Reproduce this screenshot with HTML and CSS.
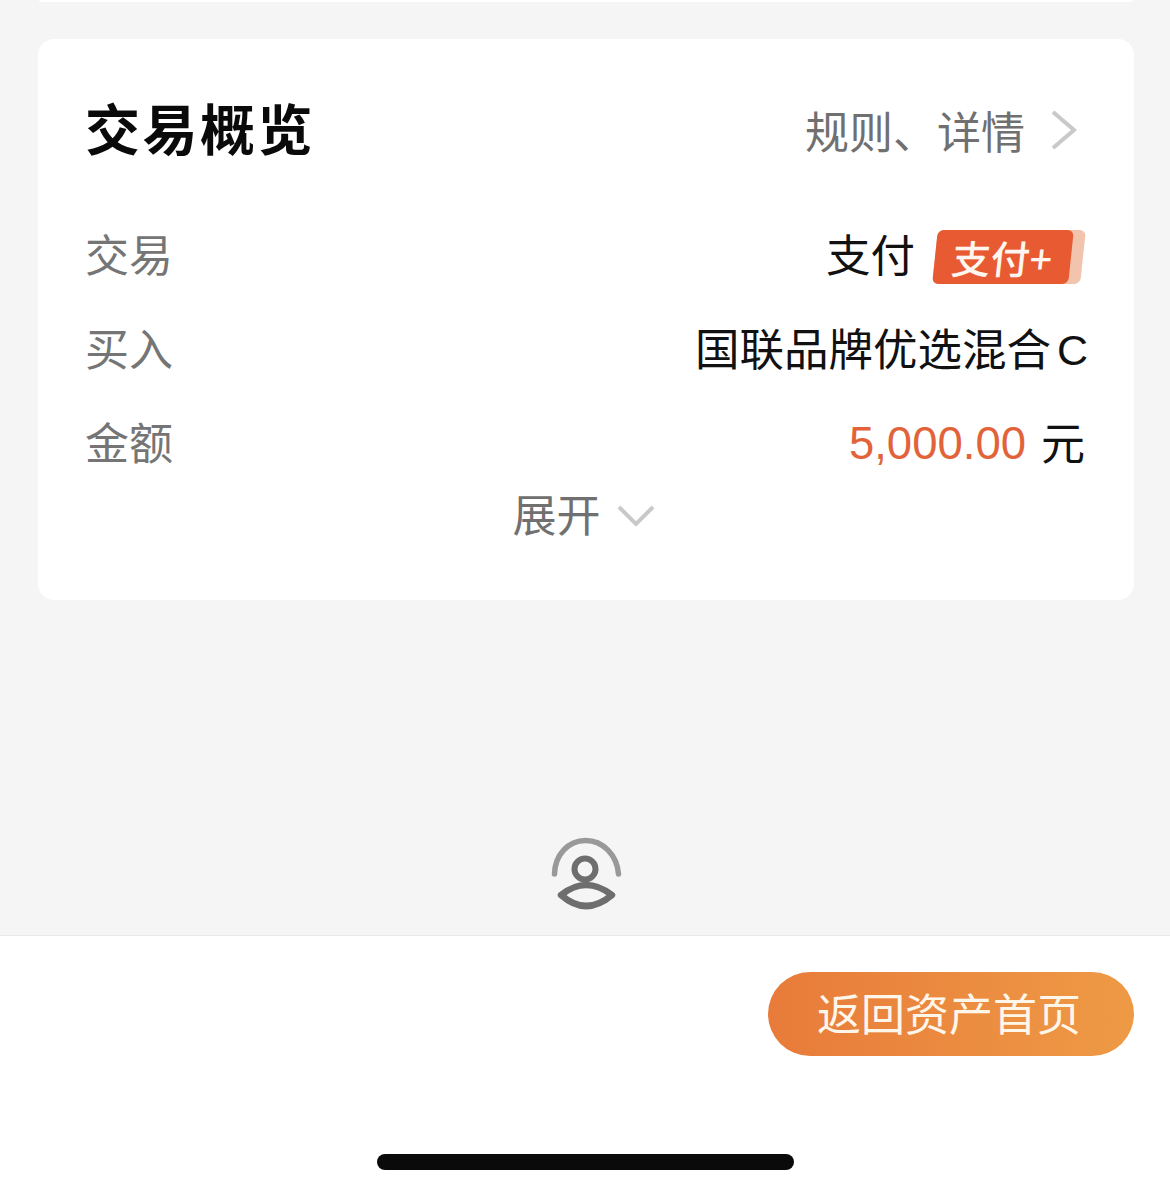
FILE: index.html
```html
<!DOCTYPE html>
<html lang="zh-CN">
  <head>
    <meta charset="UTF-8" />
    <meta name="viewport" content="width=device-width, initial-scale=1.0" />
    <title>交易概览</title>
    <link rel="stylesheet" href="styles.css">
  </head>
  <body>
    <div class="page">
      <div class="card-tail"></div>
      <div class="card">
        <div class="card-head">
          <h2>交易概览</h2>
          <div class="head-link">
            <span>规则、详情</span>
            <svg class="arrow-right" width="28" height="42" viewBox="0 0 28 42">
              <path d="M3 3 L24 21 L3 39" fill="none" stroke="#c9c9c9" stroke-width="4" />
            </svg>
          </div>
        </div>
        <div class="row row-first">
          <span class="label">交易</span>
          <div class="value">
            <span>支付</span>
            <span class="tag"><span class="tag-text">支付+</span></span>
          </div>
        </div>
        <div class="row">
          <span class="label">买入</span>
          <div class="value">国联品牌优选混合<span class="latin">C</span></div>
        </div>
        <div class="row">
          <span class="label">金额</span>
          <div class="value"><span class="amount">5,000.00</span><span class="unit">元</span></div>
        </div>
        <div class="expand">
          <span>展开</span>
          <svg class="chevron" width="40" height="24" viewBox="0 0 40 24">
            <path d="M3 3 L20 20 L37 3" fill="none" stroke="#c9c9c9" stroke-width="4" />
          </svg>
        </div>
      </div>
      <div class="spacer">
        <svg class="advisor" width="74" height="74" viewBox="0 0 74 74">
          <path d="M5.5 37 C6 18 19 3.5 36.5 3.5 C54 3.5 68 18 69.5 37" fill="none" stroke="#999" stroke-width="5.5" stroke-linecap="round" />
          <circle cx="36" cy="32" r="10.5" fill="none" stroke="#6e6e6e" stroke-width="6" />
          <path d="M12 58 Q37 38 63 58 Q37 80 12 58 Z" fill="none" stroke="#6e6e6e" stroke-width="6.5" stroke-linejoin="round" />
        </svg>
      </div>
      <div class="footer">
        <div class="footer-btn-row">
          <button class="home-btn">返回资产首页</button>
        </div>
        <div class="home-bar"></div>
      </div>
    </div>
  </body>
</html>
```

FILE: styles.css
```css
* {
  box-sizing: border-box;
}
html,
body {
  margin: 0;
  padding: 0;
}
body {
  font-family: "Noto Sans CJK SC", "Liberation Sans", sans-serif;
  background: #f5f5f5;
}
.page {
  width: 1170px;
  height: 1193px;
  display: flex;
  flex-direction: column;
  overflow: hidden;
}
.card-tail {
  height: 2px;
  margin: 0 37px 37px 39px;
  background: #fff;
  border-radius: 0 0 8px 8px;
}
.card {
  height: 561px;
  margin: 0 36px 0 38px;
  padding: 0 47px;
  background: #fff;
  border-radius: 16px;
}
.card-head {
  height: 111px;
  margin-top: 35px;
  display: flex;
  justify-content: space-between;
  align-items: center;
}
.card-head h2 {
  margin: 0 0 8px;
  font-size: 55px;
  line-height: 70px;
  font-weight: 700;
  letter-spacing: 2.5px;
  color: #0a0a0a;
}
.head-link {
  display: flex;
  align-items: center;
  gap: 25px;
  margin-right: 9px;
  font-size: 44px;
  line-height: 60px;
  color: #707070;
}
.row {
  height: 94px;
  display: flex;
  justify-content: space-between;
  align-items: center;
  font-size: 44.5px;
  line-height: 60px;
}
.row-first {
  margin-top: 21px;
}
.label {
  font-size: 44px;
  color: #757575;
}
.value {
  display: flex;
  align-items: center;
  color: #111;
}
.latin {
  margin-left: 6px;
  margin-right: -1px;
  padding-top: 6px;
  font-family: "Liberation Sans", sans-serif;
  font-size: 43px;
}
.tag {
  width: 148px;
  height: 54px;
  margin-left: 20px;
  margin-right: 4px;
  display: flex;
  align-items: center;
  background: #f2c4ae;
  border-radius: 6px;
  transform: translateY(4px) skewX(-6deg);
}
.tag-text {
  width: 136px;
  height: 54px;
  padding-left: 17px;
  background: #e85a32;
  border-radius: 6px;
  color: #fff6f0;
  font-size: 39px;
  font-weight: 500;
  line-height: 54px;
  white-space: nowrap;
}
.amount {
  padding-top: 6px;
  font-family: "Liberation Sans", sans-serif;
  font-size: 45.5px;
  color: #e2633a;
}
.unit {
  margin-left: 15px;
  margin-right: 2px;
  font-size: 44px;
}
.expand {
  display: flex;
  justify-content: center;
  align-items: center;
  gap: 15px;
  margin-top: -5px;
  margin-right: 4px;
  font-size: 44px;
  line-height: 60px;
  color: #707070;
}
.chevron {
  margin-top: 6px;
}
.spacer {
  flex: 1;
  display: flex;
  justify-content: center;
  align-items: flex-end;
  padding-bottom: 24px;
}
.advisor {
  margin-left: 2px;
}
.footer {
  height: 258px;
  background: #fff;
  border-top: 1px solid #e9e9e9;
  display: flex;
  flex-direction: column;
}
.footer-btn-row {
  display: flex;
  justify-content: flex-end;
  padding: 36px 36px 0 0;
}
.home-btn {
  width: 366px;
  height: 84px;
  padding: 0 4px 4px 0;
  border: none;
  border-radius: 42px;
  background: linear-gradient(to right, #e87b3a, #ee9a45);
  color: #fff6ea;
  font-family: inherit;
  font-size: 44px;
  line-height: 60px;
}
.home-bar {
  width: 417px;
  height: 16px;
  margin: 98px auto 0;
  background: #0a0a0a;
  border-radius: 8px;
}
```
